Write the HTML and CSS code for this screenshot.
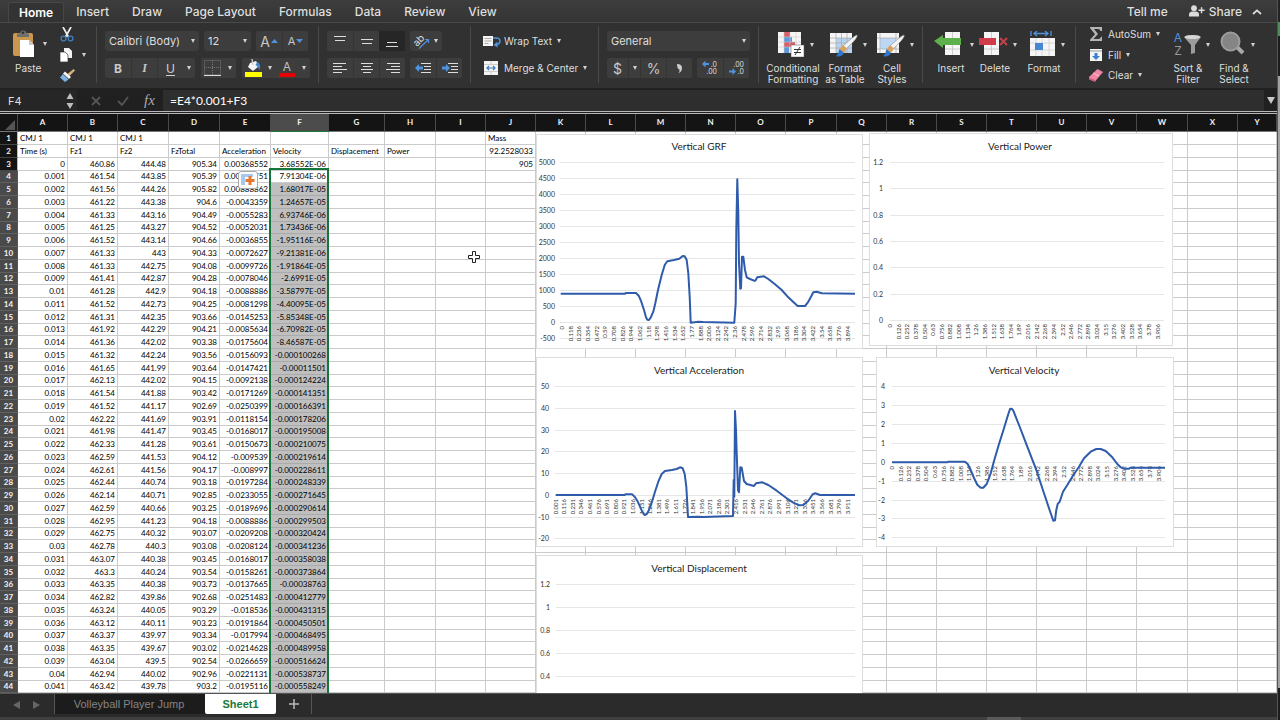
FILE: index.html
```html
<!DOCTYPE html>
<html lang="en">
<head>
<meta charset="utf-8">
<meta name="viewport" content="width=device-width, initial-scale=1">
<title>Spreadsheet</title>
<link rel="stylesheet" href="styles.css">
</head>
<body>
<div class="app">
<header class="tabs">
  <nav class="tab-list" aria-label="Ribbon tabs">
    <button class="tab tab-active">Home</button><button class="tab">Insert</button><button class="tab">Draw</button><button class="tab">Page Layout</button><button class="tab">Formulas</button><button class="tab">Data</button><button class="tab">Review</button><button class="tab">View</button>
  </nav>
  <button class="tab tell">Tell me</button>
  <button class="tab share"><svg width="16" height="12" viewBox="0 0 16 12"><g fill="#dcdcdc"><circle cx="5" cy="3.2" r="2.9"/><path d="M0 11.5V9.4C0 7.8 1.2 7 2.6 6.6h4.8C8.8 7 10 7.8 10 9.4v2.1z"/><path d="M11.8 2.2h1.5v2.3h2.3V6h-2.3v2.3h-1.5V6H9.5V4.5h2.3z"/></g></svg>Share</button>
  <button class="tab fold" aria-label="Collapse ribbon"><svg width="10" height="6" viewBox="0 0 10 6"><path d="M1 5l4-3.6L9 5" fill="none" stroke="#dcdcdc" stroke-width="1.8"/></svg></button>
</header>

<section class="ribbon" aria-label="Home ribbon">
  <div class="group clipboard">
    <button class="big paste"><span class="pic"><svg width="24" height="28" viewBox="0 0 24 28"><rect x="1" y="3" width="20" height="23" rx="2" fill="#c9974d"/><path d="M5 7V3.500h3.200a3 3 0 0 1 6 0H17V7z" fill="#6f6f6f"/><circle cx="11" cy="2.800" r="1.300" fill="#333"/><path d="M8 10h9l5 5v12H8z" fill="#fff"/><path d="M17 10v5h5z" fill="#c8c8c8"/></svg><i class="arrow"></i></span><span>Paste</span></button>
    <div class="clip-tools">
      <button class="bare" aria-label="Cut"><svg width="14" height="15" viewBox="0 0 14 15"><path d="M3 0l5.500 10M11 0L5.500 10" stroke="#eee" stroke-width="1.700" fill="none"/><circle cx="3.500" cy="11.500" r="2.400" fill="none" stroke="#3f7fc4" stroke-width="1.300"/><circle cx="10.500" cy="11.500" r="2.400" fill="none" stroke="#3f7fc4" stroke-width="1.300"/></svg></button>
      <button class="bare" aria-label="Copy"><svg width="14" height="14" viewBox="0 0 14 14"><path d="M4 0h5l3 3v7H4z" fill="#f2f2f2"/><path d="M0 4h5l3 3v7H0z" fill="#fff" stroke="#333" stroke-width=".7"/></svg><i class="arrow"></i></button>
      <button class="bare" aria-label="Format painter"><svg width="15" height="13" viewBox="0 0 15 13"><path d="M13.500 0L15 1.500 9.500 7 7.500 5z" fill="#d9b27a"/><path d="M5 2.500L11 8l-2 2-6-5.500z" fill="#f4f4f4"/><path d="M3 5l5.500 5.500L5 13 0 8.500z" fill="#7db2e8"/></svg></button>
    </div>
  </div>

  <div class="group font">
    <div class="row">
      <label class="combo name"><select aria-label="Font"><option>Calibri (Body)</option></select></label>
      <label class="combo size"><select aria-label="Font size"><option>12</option></select></label>
      <div class="set"><button class="b26" aria-label="Increase font size"><span class="letter-lg">A</span><svg width="7" height="4" viewBox="0 0 7 4"><path d="M0 4L3.500 0 7 4z" fill="#4f93dd"/></svg></button><button class="b26 line" aria-label="Decrease font size"><span class="letter-md">A</span><svg width="7" height="4" viewBox="0 0 7 4"><path d="M0 0L3.500 4 7 0z" fill="#4f93dd"/></svg></button></div>
    </div>
    <div class="row">
      <div class="set"><button class="b26 bold">B</button><button class="b26 ital line">I</button><button class="b26 under line">U</button><button class="drop" aria-label="Underline styles"><i class="arrow"></i></button></div>
      <div class="set"><button class="b24" aria-label="Borders"><svg width="17" height="16" viewBox="0 0 17 16"><path d="M.5.5h16v14H.5zM8.500 0v15M0 7.500h17" fill="none" stroke="#777" stroke-dasharray="1 1"/><path d="M0 15.500h17" stroke="#ddd"/></svg></button><button class="drop" aria-label="Border styles"><i class="arrow"></i></button></div>
      <div class="set"><button class="b22" aria-label="Fill color"><svg width="17" height="18" viewBox="0 0 17 18"><path d="M5 4l6-2 3 5-6 5-5-4z" fill="#f6f6f6"/><path d="M7 0l1 6" stroke="#ccc" stroke-width="1.400"/><path d="M12 3c3 1 4 4 2.500 8-1-2-2-4-4-5z" fill="#4586ce"/><rect y="13" width="17" height="5" fill="#ffff00"/></svg></button><button class="drop" aria-label="Fill colors"><i class="arrow"></i></button><button class="b22 ink" aria-label="Font color"><span>A</span></button><button class="drop" aria-label="Font colors"><i class="arrow"></i></button></div>
    </div>
  </div>

  <div class="group align">
    <div class="row">
      <div class="set"><button class="b26" aria-label="Top align"><svg width="12" height="12"><path d="M0 1.500h12M1 5.500h10" stroke="#ddd"/></svg></button><button class="b26 line" aria-label="Middle align"><svg width="12" height="12"><path d="M0 4.500h12M1 8.500h10" stroke="#ddd"/></svg></button><button class="b26 pressed" aria-label="Bottom align"><svg width="12" height="12"><path d="M1 7.500h10M0 11.500h12" stroke="#ddd"/></svg></button></div>
      <div class="set"><button class="b32" aria-label="Orientation"><svg class="open" width="16" height="16" viewBox="0 0 16 16"><text x="0" y="11" transform="rotate(-45 5 9)" class="ab">ab</text><path d="M5 15.500L14.500 6.500M14.500 10V6.500H11" fill="none" stroke="#4f93dd" stroke-width="1.200"/></svg><i class="arrow"></i></button></div>
    </div>
    <div class="row">
      <div class="set"><button class="b26" aria-label="Align left"><svg width="14" height="11"><path d="M0 .5h13M0 3.500h9M0 6.500h14M0 9.500h9" stroke="#ddd"/></svg></button><button class="b26 line" aria-label="Center"><svg width="14" height="11"><path d="M1 .5h12M3 3.500h8M1 6.500h12M3 9.500h8" stroke="#ddd"/></svg></button><button class="b26 line" aria-label="Align right"><svg width="14" height="11"><path d="M1 .5h13M5 3.500h9M0 6.500h14M5 9.500h9" stroke="#ddd"/></svg></button></div>
      <div class="set"><button class="b26" aria-label="Decrease indent"><svg width="16" height="11" viewBox="0 0 16 11"><path d="M6 .5h10M9 3.500h7M9 6.500h7M6 9.500h10" stroke="#ddd"/><path d="M0 5l4-4v2.500h4v3H4V9z" fill="#4f93dd"/></svg></button><button class="b26 line" aria-label="Increase indent"><svg width="16" height="11" viewBox="0 0 16 11"><path d="M6 .5h10M9 3.500h7M9 6.500h7M6 9.500h10" stroke="#ddd"/><path d="M8 5L4 1v2.500H0v3h4V9z" fill="#4f93dd"/></svg></button></div>
    </div>
  </div>

  <div class="group wrap">
    <button class="bare text"><svg width="18" height="14" viewBox="0 0 18 14"><path d="M0 2h10v10H0z" fill="#f4f4f4"/><path d="M1.500 4.500h7M1.500 7h7M1.500 9.500h4" stroke="#aaa"/><path d="M10 4h3q4 0 4 3t-4 4" fill="none" stroke="#4f93dd" stroke-width="1.500"/><path d="M14.500 7.500v6L10.500 11z" fill="#4f93dd"/></svg>Wrap Text<i class="arrow"></i></button>
    <button class="bare text"><svg width="18" height="14" viewBox="0 0 18 14"><path d="M1 0h14v14H1z" fill="#f4f4f4"/><path d="M8 0v3.500M8 10.500V14M1 3.500h14M1 10.500h14" stroke="#bbb" stroke-width=".7"/><path d="M4 7h8M6 5L4 7l2 2M10 5l2 2-2 2" stroke="#3c7bc4" fill="none" stroke-width="1.200"/></svg>Merge &amp; Center<i class="arrow"></i></button>
  </div>

  <div class="group number">
    <div class="row"><label class="combo format"><select aria-label="Number format"><option>General</option></select></label></div>
    <div class="row"><div class="set sym"><button class="b22">$</button><button class="drop line" aria-label="Currencies"><i class="arrow"></i></button><button class="b26 line">%</button><button class="b26 line" aria-label="Comma style"><svg width="7" height="11" viewBox="0 0 7 11"><path d="M1 1q5 0 5 4t-4 5.500q2-2 1.500-4Q1 6 1 1z" fill="#ccc"/></svg></button></div>
    <div class="set"><button class="b26" aria-label="Increase decimals"><svg class="open" width="18" height="16" viewBox="0 0 18 16"><path d="M1 4l3.500-3.500V3H8v2H4.500v2.500z" fill="#4f93dd"/><text x="16" y="7" class="dec">.0</text><text x="16" y="14" class="dec">.00</text></svg></button><button class="b26 line" aria-label="Decrease decimals"><svg class="open" width="18" height="16" viewBox="0 0 18 16"><path d="M8 11.500L4.500 8v2.500H1v2h3.500V15z" fill="#4f93dd"/><text x="16" y="7" class="dec">.00</text><text x="16" y="14" class="dec">.0</text></svg></button></div></div>
  </div>

  <div class="group styles">
    <button class="big w56"><span class="pic"><svg width="27" height="26" viewBox="0 0 27 26"><path d="M0 1h23v21H0z" fill="#f5f5f5"/><path d="M6 1h6v5H6zM6 11h11v5H6z" fill="#d9606a"/><path d="M6 6h8v5H6zM6 16h5v6H6z" fill="#5b98dc"/><path d="M6 1v21M12 1v21M18 1v21M0 6h23M0 11h23M0 16h23" stroke="#c9c9c9" stroke-width=".6"/><rect x="13" y="14" width="13" height="12" fill="#fff" stroke="#555" stroke-width=".5"/><path d="M16 18.500h7M16 21.500h7M22 16l-5 8" stroke="#333"/></svg><i class="arrow"></i></span><span>Conditional<br>Formatting</span></button>
    <button class="big w48"><span class="pic"><svg width="29" height="26" viewBox="0 0 29 26"><path d="M1 2h22v20H1z" fill="#f5f5f5"/><path d="M7 7h16v15H7z" fill="#b9d2ee"/><path d="M7 2v20M12.500 2v20M18 2v20M1 7h22M1 12h22M1 17h22" stroke="#aaa" stroke-width=".7"/><path d="M28 4q2 2-11 14l-3-3Q26 4 28 4z" fill="#f3f3f3" stroke="#888" stroke-width=".6"/><path d="M14 14l4 3.500-3 4.500-5-3z" fill="#d9a35c"/><path d="M10.500 18l4.500 4q-3 5-8 3 2-1 3.500-7z" fill="#2d78cf"/></svg><i class="arrow"></i></span><span>Format<br>as Table</span></button>
    <button class="big w46"><span class="pic"><svg width="29" height="26" viewBox="0 0 29 26"><path d="M1 2h22v20H1z" fill="#f5f5f5"/><path d="M4 7h16v11H4z" fill="#bcd7f4"/><path d="M4 2v20M20 2v20M1 7h22M1 18h22" stroke="#aaa" stroke-width=".7"/><path d="M28 4q2 2-11 14l-3-3Q26 4 28 4z" fill="#f3f3f3" stroke="#888" stroke-width=".6"/><path d="M14 14l4 3.500-3 4.500-5-3z" fill="#d9a35c"/><path d="M10.500 18l4.500 4q-3 5-8 3 2-1 3.500-7z" fill="#2d78cf"/></svg><i class="arrow"></i></span><span>Cell<br>Styles</span></button>
  </div>

  <div class="group cells">
    <button class="big w44"><span class="pic"><svg width="31" height="26" viewBox="0 0 31 26"><path d="M11 1h15v23H11z" fill="#f5f5f5"/><path d="M18.500 1v23M11 18h15" stroke="#bbb" stroke-width=".7"/><path d="M0 10l9-6v3h18v7H9v3z" fill="#5eb04c"/></svg><i class="arrow"></i></span><span>Insert</span></button>
    <button class="big w44"><span class="pic"><svg width="29" height="26" viewBox="0 0 29 26"><path d="M5 1h15v23H5z" fill="#f5f5f5"/><path d="M12.500 1v23M5 18h15" stroke="#bbb" stroke-width=".7"/><path d="M0 7h17v7H0z" fill="#d13c4b"/><path d="M21 7l7 7M28 7l-7 7" stroke="#c4414b" stroke-width="2"/></svg><i class="arrow"></i></span><span>Delete</span></button>
    <button class="big w52"><span class="pic"><svg width="27" height="26" viewBox="0 0 27 26"><path d="M1 7h25v18H1z" fill="#f5f5f5"/><path d="M7 7v18M13 7v18M20 7v18M1 12h25M1 19h25" stroke="#ccc" stroke-width=".7"/><path d="M6 12h8v7H6z" fill="#4488d4"/><path d="M2 0v5M22 0v5M5 2.500h14M8 0L5 2.500 8 5M16 0l3 2.500L16 5" fill="none" stroke="#4f93dd" stroke-width="1.300"/></svg><i class="arrow"></i></span><span>Format</span></button>
  </div>

  <div class="group editing">
    <div class="edit-tools">
      <button class="bare text"><svg width="14" height="14" viewBox="0 0 14 14"><path d="M1 0h12v4h-1.500q-.4-2-2.500-2H5l4 5-4.500 5H9.500q2 0 2.500-2.300h1V14H1v-1.200L6 7.300 1 1z" fill="#b5b5b5"/></svg>AutoSum<i class="arrow"></i></button>
      <button class="bare text"><svg width="14" height="14" viewBox="0 0 14 14"><path d="M1 1h12v12H1z" fill="#f5f5f5"/><path d="M1 3h12" stroke="#999"/><path d="M5.500 5h3v3H11l-4 4-4-4h2.500z" fill="#3c7fce"/></svg>Fill<i class="arrow"></i></button>
      <button class="bare text"><svg width="14" height="14" viewBox="0 0 14 14"><path d="M8.500 1L14 4 6 13.500 0 11V9z" fill="#f287a5"/><path d="M0 9.500l6 2.500v2L0 11.500z" fill="#c95f80"/><path d="M4 5l6 3" stroke="#fbc3d1"/></svg>Clear<i class="arrow"></i></button>
    </div>
    <button class="big w46"><span class="pic"><svg width="28" height="26" viewBox="0 0 28 26"><text x="5" y="11" class="az a">A</text><text x="5" y="24" class="az z">Z</text><path d="M11 6q8-4 17 0l-6 8v8l-4 1v-9z" fill="#9c9c9c"/><ellipse cx="19.500" cy="6" rx="8" ry="2" fill="#d5d5d5"/></svg><i class="arrow"></i></span><span>Sort &amp;<br>Filter</span></button>
    <button class="big w46"><span class="pic"><svg width="26" height="26" viewBox="0 0 26 26"><path d="M16 15l7 7" stroke="#a9a9a9" stroke-width="4"/><circle cx="10.500" cy="10.500" r="9" fill="#858585" stroke="#9c9c9c" stroke-width="2"/></svg><i class="arrow"></i></span><span>Find &amp;<br>Select</span></button>
  </div>
</section>

<section class="formula-bar" aria-label="Formula bar">
  <input class="name-box" aria-label="Name box" value="F4">
  <button class="stepper" aria-label="Choose cell"><svg width="8" height="18" viewBox="0 0 8 18"><path d="M4 1l3.500 6h-7zM4 17L.5 11h7z" fill="#bdbdbd"/></svg></button>
  <button class="fx-btn" aria-label="Cancel"><svg width="10" height="10"><path d="M1 1l8 8M9 1L1 9" stroke="#555" stroke-width="1.800"/></svg></button>
  <button class="fx-btn" aria-label="Enter"><svg width="12" height="10"><path d="M1 5l4 4 6-8" fill="none" stroke="#555" stroke-width="1.800"/></svg></button>
  <button class="fx-btn fx">fx</button>
  <input class="formula" aria-label="Formula" value="=E4*0.001+F3">
  <button class="expand" aria-label="Expand formula bar"><svg width="8" height="7"><path d="M0 0h8L4 7z" fill="#c8c8c8"/></svg></button>
</section>

<main class="sheet">
  <table class="cells-table" id="grid"></table>
  <div class="selection"></div>
  <button class="autofill" aria-label="Auto fill options"><svg width="18" height="16" viewBox="0 0 18 16"><path d="M2 2h12v3H6v8H2z" fill="#a9c8ef"/><path d="M9.500 4h3v3h3v3h-3v3h-3v-3h-3V7h3z" fill="#e8762c"/></svg></button>
  <div id="charts"></div>
  <svg class="cursor" width="14" height="14" viewBox="0 0 14 14"><path d="M5.500 1.500h3v4h4v3h-4v4h-3v-4h-4v-3h4z" fill="#fff" stroke="#222"/></svg>
</main>

<footer class="sheet-tabs">
  <div class="tab-row">
  <button class="step" aria-label="Previous sheet"><svg width="7" height="8"><path d="M7 0v8L0 4z" fill="#666"/></svg></button>
  <button class="step" aria-label="Next sheet"><svg width="7" height="8"><path d="M0 0v8l7-4z" fill="#666"/></svg></button>
  <button class="sheet-tab">Volleyball Player Jump</button>
  <button class="sheet-tab current">Sheet1</button>
  <button class="add" aria-label="Add sheet"><svg width="10" height="10"><path d="M5 0v10M0 5h10" stroke="#bbb" stroke-width="1.500"/></svg></button>
  </div>
  <div class="status"><span class="thumb"></span></div>
</footer>
</div>
<script src="app.js"></script>
</body>
</html>
```
FILE: styles.css
```css
* { box-sizing: border-box; }
body { margin: 0; background: linear-gradient(#232323 22px, #4e8a5c 22px, #4e8a5c 36px, #1d1d20 36px, #1d1d20 76px, #a3a1a6 76px, #a3a1a6 688px, #1d1d20 688px); font-family: Inter, "Liberation Sans", sans-serif; }
button, input, select { font: inherit; color: inherit; background: none; border: 0; padding: 0; margin: 0; border-radius: 0; }
svg { flex: none; display: block; }
.open { overflow: visible; }
.app { display: flex; flex-direction: column; height: 100vh; margin-right: 3px; overflow: hidden; color: #dedede; background: #2b2b2b; box-shadow: 1px 0 0 #55535a; }

.tabs { display: flex; align-items: flex-end; height: 23px; flex: none; background: linear-gradient(#3d3d3d, #343434); border-bottom: 1px solid #484848; }
.tab-list { display: flex; flex: 1; padding-left: 8px; }
.tab { height: 20px; padding: 0 11px 1px 12px; font-size: 12px; font-weight: 500; line-height: 19px; white-space: nowrap; }
.tab-active { padding: 0 10px 1px; color: #fff; font-weight: 600; background: #333; border: 1px solid #474747; border-bottom: 0; border-radius: 3px 3px 0 0; }
.tell { padding: 0 11px 1px; }
.share { display: flex; align-items: center; gap: 4px; padding: 0 6px 2px 10px; }
.fold { display: flex; align-items: center; padding: 0 15px 0 4px; }

.ribbon { display: flex; flex: none; height: 66px; padding: 3px 0 5px; background: #313131; border-bottom: 1px solid #222; font-size: 10px; }
.group { display: flex; flex: none; border-right: 1px solid #4a4a4a; }
.font, .align, .number, .wrap { flex-direction: column; gap: 7px; padding: 5px 8px 0; }
.row { display: flex; gap: 5px; }
.set { display: flex; border-radius: 2px; background: #3d3d3d; }
.font .row:last-child { gap: 6px; }
.set button { height: 20px; display: flex; align-items: center; justify-content: center; }
.b22 { width: 22px; } .b24 { width: 23px; } .b26 { width: 26px; gap: 1px; } .b32 { width: 32px; gap: 4px; }
.drop { width: 12px; }
.line { border-left: 1px solid #353535 !important; }
.set .pressed { background: #262626; }
.arrow { flex: none; width: 0; height: 0; border: 2px solid transparent; border-top: 4px solid #d2d2d2; border-bottom: 0; }
.combo { position: relative; display: block; height: 20px; background: #3d3d3d; border-radius: 3px; }
.combo select { appearance: none; width: 100%; height: 20px; padding: 0 4px; font-size: 11px; outline: 0; }
.combo::after { content: ""; position: absolute; right: 4px; top: 8px; border: 2px solid transparent; border-top: 4px solid #d2d2d2; border-bottom: 0; pointer-events: none; }
.name { width: 94px; } .size { width: 47px; } .format { width: 143px; }
.letter-lg { font-size: 14px; color: #c8c8c8; } .letter-md { font-size: 11px; color: #c8c8c8; }
.bold { font-size: 12px; font-weight: 700; color: #c8c8c8; }
.ital { font: italic 700 12px "Liberation Serif", serif; color: #c8c8c8; }
.under { font-size: 12px; text-decoration: underline; text-underline-offset: 2px; color: #d0d0d0; }
.ink span { width: 16px; height: 17px; border-bottom: 4px solid #e60000; font-size: 12px; line-height: 13px; color: #bfbfbf; }
.ab { font-size: 10px; fill: #ddd; }
.dec { font-size: 7px; fill: #ddd; text-anchor: end; }
.sym { font-size: 14px; color: #c8c8c8; }
.sym .b22 { width: 21px; }

.clipboard { width: 97px; padding-left: 8px; }
.big { display: flex; flex-direction: column; align-items: center; padding-top: 5px; gap: 6px; line-height: 11px; text-align: center; font-size: 10px; white-space: nowrap; }
.pic { display: flex; align-items: center; gap: 7px; height: 26px; }
.paste { width: 40px; align-items: flex-start; gap: 6px; }
.paste > span:last-child { padding-left: 7px; }
.paste .pic { padding-left: 4px; }
.clip-tools { display: flex; flex-direction: column; align-items: flex-start; padding: 1px 0 0 12px; gap: 5px; }
.bare { display: flex; align-items: center; gap: 8px; height: 16px; white-space: nowrap; font-size: 10px; }
.wrap { width: 128px; padding-left: 12px; }
.wrap .bare { height: 20px; gap: 3px; }
.wrap .arrow { margin-left: 2px; }
.styles { width: 164px; padding-left: 6px; }
.cells { width: 153px; padding-left: 6px; }
.w56 { width: 56px; } .w48 { width: 48px; } .w46 { width: 46px; } .w44 { width: 44px; } .w52 { width: 54px; }
.styles .pic, .cells .pic, .editing .pic { gap: 5px; padding-left: 6px; }
.styles .arrow, .cells .arrow, .editing .pic .arrow { margin-top: 2px; }
.editing { flex: 1; border-right: 0; padding-left: 13px; }
.edit-tools { width: 76px; display: flex; flex-direction: column; gap: 5px; }
.edit-tools .bare { gap: 5px; }
.az { font-size: 12px; text-anchor: middle; } .a { fill: #4f93dd; } .z { fill: #999; }

.formula-bar { display: flex; align-items: stretch; flex: none; height: 25px; padding-top: 1px; background: #202020; border-bottom: 3px double #b9b5ba; }
.name-box { width: 62px; padding: 0 8px; font-size: 11px; background: #262626; }
.stepper { width: 15px; display: grid; place-items: center; background: #262626; }
.fx-btn { width: 27px; display: grid; place-items: center; }
.stepper + .fx-btn { margin-left: 5px; }
.fx { font: italic 15px "Liberation Serif", serif; color: #aaa; }
.formula { flex: 1; min-width: 0; padding: 0 7px; font: 12px Lato, sans-serif; color: #fff; background: #2e2e2e; }
.expand { width: 13px; display: grid; place-items: center; }

.sheet { position: relative; flex: 1; min-height: 0; overflow: hidden; background: #fff; }
.cells-table { width: 100%; table-layout: fixed; border-collapse: separate; border-spacing: 0; font: 8px Lato, sans-serif; line-height: 11px; color: #000; }
.cells-table th { padding: 0; background: #141414; color: #f2f2f2; font-weight: 700; text-align: center; }
.cells-table thead th { height: 18px; border-right: 1px solid #4a4a4a; border-bottom: 1px solid #777; }
.cells-table thead .picked { background: #4c4c4c; border-bottom-color: #1b7a3a; }
.cells-table tbody tr { height: 13px; }
.cells-table tbody tr:nth-child(4n) { height: 12px; }
.cells-table tbody th { border-bottom: 1px solid #444; border-right: 1px solid #bbb; }
.cells-table tbody .picked { background: #4a4a4a; border-bottom-color: #606060; border-right-color: #1b7a3a; }
.cells-table td { padding: 0 2px; border-right: 1px solid #cbcbcb; border-bottom: 1px solid #cbcbcb; white-space: nowrap; text-align: right; }
.cells-table .words { text-align: left; }
.cells-table .filled { background: #bfbfbf; border-bottom-color: #aaa; }
.corner-mark { width: 0; height: 0; margin: 4px 0 0 5px; border: 5px solid #555; border-top-color: transparent; border-left-color: transparent; }
.c18 { width: 18px; } .c50 { width: 50px; } .c51 { width: 51px; } .c56 { width: 56px; } .c58 { width: 58px; }
.selection { position: absolute; left: 269px; top: 54px; bottom: -3px; width: 60px; border: 2px solid #16753a; }
.autofill { position: absolute; left: 238px; top: 57px; width: 20px; height: 18px; background: #fbfbfb; border: 1px solid #aaa; border-radius: 3px; }
.cursor { position: absolute; left: 467px; top: 136px; }
.chart { position: absolute; background: #fff; font-family: Lato, sans-serif; fill: #333; }
.frame { fill: none; stroke: #dedede; }
.rule { stroke: #e6e6e6; }
.chart-title { font-size: 10px; text-anchor: middle; fill: #222; }
.ylab { font-size: 7px; text-anchor: end; }
.xlab { font-size: 6px; text-anchor: end; }
.curve { fill: none; stroke: #2f5bab; stroke-width: 2; stroke-linejoin: round; }

.sheet-tabs { flex: none; }
.tab-row { display: flex; height: 24px; align-items: flex-start; border-top: 1px solid #555; background: #2b2b2b; font: 11px "Liberation Sans", sans-serif; }
.step { width: 20px; height: 22px; display: grid; place-items: center; }
.step:first-child { margin-left: 6px; }
.step + .sheet-tab { margin-left: 8px; border-left: 1px solid #555; }
.sheet-tab { width: 151px; height: 20px; padding-right: 2px; font-size: 11px; color: #858585; background: #1c1c1c; }
.current { width: 71px; padding: 0; background: #fff; color: #1b7a3a; font-weight: 700; border-radius: 0 0 2px 2px; }
.add { width: 36px; height: 20px; display: grid; place-items: center; border-right: 1px solid #555; }
.status { height: 3px; background: #403e40; display: flex; justify-content: flex-end; }
.thumb { width: 34px; margin-right: 256px; background: #5a5a5a; }
```
FILE: app.js
```js
const widths = [18, 50, 50, 51, 51, 51, 58, 56, 51, 50, 50, 50, 50, 50, 50, 50, 51, 50, 50, 50, 50, 50, 50, 51, 50];
const letters = 'ABCDEFGHIJKLMNOPQRSTUVWXY'.split('');
const samples = `0 460.86 444.48 905.34 0.00368552 3.68552E-06
0.001 461.54 443.85 905.39 0.00422751 7.91304E-06
0.002 461.56 444.26 905.82 0.00888862 1.68017E-05
0.003 461.22 443.38 904.6 -0.0043359 1.24657E-05
0.004 461.33 443.16 904.49 -0.0055283 6.93746E-06
0.005 461.25 443.27 904.52 -0.0052031 1.73436E-06
0.006 461.52 443.14 904.66 -0.0036855 -1.95116E-06
0.007 461.33 443 904.33 -0.0072627 -9.21381E-06
0.008 461.33 442.75 904.08 -0.0099726 -1.91864E-05
0.009 461.41 442.87 904.28 -0.0078046 -2.6991E-05
0.01 461.28 442.9 904.18 -0.0088886 -3.58797E-05
0.011 461.52 442.73 904.25 -0.0081298 -4.40095E-05
0.012 461.31 442.35 903.66 -0.0145253 -5.85348E-05
0.013 461.92 442.29 904.21 -0.0085634 -6.70982E-05
0.014 461.36 442.02 903.38 -0.0175604 -8.46587E-05
0.015 461.32 442.24 903.56 -0.0156093 -0.000100268
0.016 461.65 441.99 903.64 -0.0147421 -0.00011501
0.017 462.13 442.02 904.15 -0.0092138 -0.000124224
0.018 461.54 441.88 903.42 -0.0171269 -0.000141351
0.019 461.52 441.17 902.69 -0.0250399 -0.000166391
0.02 462.22 441.69 903.91 -0.0118154 -0.000178206
0.021 461.98 441.47 903.45 -0.0168017 -0.000195008
0.022 462.33 441.28 903.61 -0.0150673 -0.000210075
0.023 462.59 441.53 904.12 -0.009539 -0.000219614
0.024 462.61 441.56 904.17 -0.008997 -0.000228611
0.025 462.44 440.74 903.18 -0.0197284 -0.000248339
0.026 462.14 440.71 902.85 -0.0233055 -0.000271645
0.027 462.59 440.66 903.25 -0.0189696 -0.000290614
0.028 462.95 441.23 904.18 -0.0088886 -0.000299503
0.029 462.75 440.32 903.07 -0.0209208 -0.000320424
0.03 462.78 440.3 903.08 -0.0208124 -0.000341236
0.031 463.07 440.38 903.45 -0.0168017 -0.000358038
0.032 463.3 440.24 903.54 -0.0158261 -0.000373864
0.033 463.35 440.38 903.73 -0.0137665 -0.00038763
0.034 462.82 439.86 902.68 -0.0251483 -0.000412779
0.035 463.24 440.05 903.29 -0.018536 -0.000431315
0.036 463.12 440.11 903.23 -0.0191864 -0.000450501
0.037 463.37 439.97 903.34 -0.017994 -0.000468495
0.038 463.35 439.67 903.02 -0.0214628 -0.000489958
0.039 463.04 439.5 902.54 -0.0266659 -0.000516624
0.04 462.94 440.02 902.96 -0.0221131 -0.000538737
0.041 463.42 439.78 903.2 -0.0195116 -0.000558249`.split('\n').map(line => line.split(' '));
samples[0][9] = '905';
const rows = [
  ['CMJ 1', 'CMJ 1', 'CMJ 1', , , , , , , 'Mass'],
  ['Time (s)', 'Fz1', 'Fz2', 'FzTotal', 'Acceleration', 'Velocity', 'Displacement', 'Power', , '92.2528033'],
  ...samples
];

let html = '<colgroup>' + widths.map(w => `<col class="c${w}">`).join('') + '<col></colgroup>';
html += '<thead><tr><th><div class="corner-mark"></div></th>' +
  letters.map(l => `<th${l === 'F' ? ' class="picked"' : ''}>${l}</th>`).join('') + '</tr></thead><tbody>';
rows.forEach((row, r) => {
  html += `<tr><th${r > 2 ? ' class="picked"' : ''}>${r + 1}</th>`;
  letters.forEach((l, c) => {
    const v = row[c] || '';
    const cls = v && isNaN(v) ? ' class="words"' : (c === 5 && r > 3 ? ' class="filled"' : '');
    html += `<td${cls}>${v}</td>`;
  });
  html += '</tr>';
});
document.getElementById('grid').innerHTML = html + '</tbody>';

// Each chart is drawn in window coordinates; curve points are in thirds of a pixel from `origin`.
const TOP = 114;
const charts = [
  { title: 'Vertical GRF', box: [536, 134, 327, 215], mid: 699, ty: 150, x: [560, 855], y: 162, step: 16, labels: [5000, 4500, 4000, 3500, 3000, 2500, 2000, 1500, 1000, 500, 0, -500], lx: 555,
    cat: [0, 0.118, 33, 562, 847.7, 326], origin: [530, 130],
    pts: '92,491 285,491 287,489 318,489 326,497 334,515 342,540 348,562 352,569 357,570 362,563 370,545 376,520 384,480 395,435 404,405 412,394 432,390 448,386 458,378 464,379 470,390 475,430 479,500 482,578 505,575 520,576 613,578 617,520 619,300 622,148 625,250 627,400 631,476 633,475 636,380 640,380 645,420 650,442 660,447 672,452 676,452 682,442 702,439 715,447 735,463 755,480 775,502 790,516 803,528 825,528 833,518 843,500 850,487 860,485 875,490 975,491' },
  { title: 'Vertical Power', box: [869, 133, 304, 213], mid: 1020, ty: 150, x: [890, 1164], y: 162, step: 26.33, labels: [1.2, 1, 0.8, 0.6, 0.4, 0.2, 0], lx: 883,
    cat: [0, 0.126, 31, 890, 1157.500, 324] },
  { title: 'Vertical Acceleration', box: [536, 357, 327, 190], mid: 699, ty: 374, x: [555, 855], y: 386, step: 21.77, labels: [50, 40, 30, 20, 10, 0, -10, -20], lx: 549,
    cat: [0.001, 0.115, 34, 555.700, 847.700, 499], origin: [530, 350],
    pts: '77,435 284,435 286,433 306,433 314,440 322,452 330,470 338,488 344,495 350,492 357,480 366,455 375,425 385,395 395,372 405,363 425,360 440,357 450,352 458,355 464,372 469,410 472,460 474,501 505,500 520,501 609,498 611,390 613,440 615,183 618,240 620,310 624,420 627,427 631,352 635,353 642,393 650,402 672,408 678,400 697,397 715,405 740,422 770,445 790,458 808,466 820,465 835,452 848,433 856,430 870,435 975,435' },
  { title: 'Vertical Velocity', box: [876, 357, 298, 190], mid: 1024, ty: 374, x: [892, 1165], y: 386, step: 18.92, labels: [4, 3, 2, 1, 0, -1, -2, -3, -4], lx: 885,
    cat: [0, 0.126, 31, 892, 1158.500, 466], origin: [864, 350],
    pts: '84,337 250,337 252,335 303,335 311,342 320,360 330,384 340,404 350,413 358,413 368,402 380,370 391,330 404,285 420,235 432,195 438,177 443,176 448,182 465,225 490,290 515,355 540,430 560,490 568,512 573,511 577,480 581,462 587,455 597,425 610,405 625,380 645,350 660,325 680,305 697,297 710,297 725,303 745,322 760,342 770,352 780,356 795,356 800,353 903,353' },
  { title: 'Vertical Displacement', box: [536, 555, 327, 190], mid: 699, ty: 572, x: [556, 855], y: 584, step: 23.1, labels: [1.2, 1, 0.8, 0.6, 0.4, 0.2, 0], lx: 550 }
];

document.getElementById('charts').innerHTML = charts.map(c => {
  const [bx, by, bw, bh] = c.box;
  let s = `<svg class="chart" role="img" aria-label="${c.title}" width="${bw}" height="${bh}" viewBox="${c.box.join(' ')}" style="left:${bx}px;top:${by - TOP}px">`;
  s += `<rect class="frame" x="${bx + 0.5}" y="${by + 0.5}" width="${bw - 1}" height="${bh - 1}"/>`;
  s += `<text class="chart-title" x="${c.mid}" y="${c.ty}">${c.title}</text>`;
  c.labels.forEach((t, i) => {
    const y = Math.round(c.y + i * c.step) + 0.5;
    s += `<path class="rule" d="M${c.x[0]} ${y}H${c.x[1]}"/><text class="ylab" x="${c.lx}" y="${y + 2}">${t}</text>`;
  });
  if (c.cat) {
    const [start, inc, n, x0, x1, y] = c.cat;
    for (let i = 0; i <= n; i++) {
      const x = x0 + (x1 - x0) * i / n + 2;
      s += `<text class="xlab" transform="translate(${x} ${y}) rotate(-90)">${+(start + inc * i).toFixed(3)}</text>`;
    }
  }
  if (c.pts) {
    const p = c.pts.split(' ').map(q => q.split(',').map((v, k) => (c.origin[k] + v / 3).toFixed(1)).join(','));
    s += `<polyline class="curve" points="${p.join(' ')}"/>`;
  }
  return s + '</svg>';
}).join('');
```
